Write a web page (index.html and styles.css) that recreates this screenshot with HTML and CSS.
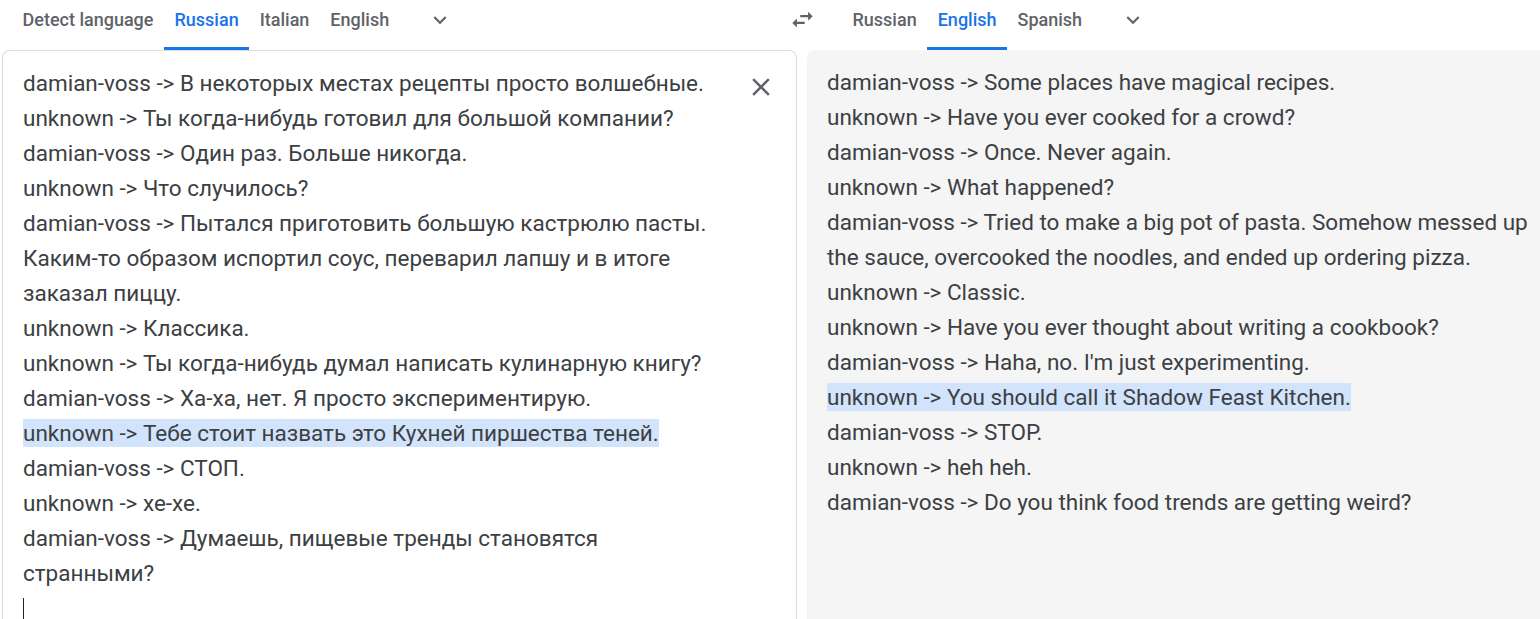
FILE: index.html
```html
<!DOCTYPE html>
<html lang="en">
<head>
<meta charset="utf-8">
<link rel="stylesheet" href="styles.css">
</head>
<body>
<div class="page">
  <div class="header">
    <div class="tabs tabs-left">
      <div class="tab">Detect language</div>
      <div class="tab active">Russian</div>
      <div class="tab">Italian</div>
      <div class="tab">English</div>
      <div class="chev"><svg width="24" height="24" viewBox="0 0 24 24"><path d="M7.41 8.59L12 13.17l4.59-4.58L18 10l-6 6-6-6 1.41-1.41z" fill="#5f6368"/></svg></div>
    </div>
    <div class="swap"><svg width="27" height="27" viewBox="0 0 24 24"><path d="M6.99 11L3 15l3.99 4v-3H14v-2H6.99v-3zM21 9l-3.99-4v3H10v2h7.01v3L21 9z" fill="#5f6368"/></svg></div>
    <div class="tabs tabs-right">
      <div class="tab">Russian</div>
      <div class="tab active">English</div>
      <div class="tab">Spanish</div>
      <div class="chev"><svg width="24" height="24" viewBox="0 0 24 24"><path d="M7.41 8.59L12 13.17l4.59-4.58L18 10l-6 6-6-6 1.41-1.41z" fill="#5f6368"/></svg></div>
    </div>
  </div>
  <div class="panels">
    <div class="panel source">
      <div class="text">
        <div>damian-voss -&gt; В некоторых местах рецепты просто волшебные.</div>
        <div>unknown -&gt; Ты когда-нибудь готовил для большой компании?</div>
        <div>damian-voss -&gt; Один раз. Больше никогда.</div>
        <div>unknown -&gt; Что случилось?</div>
        <div>damian-voss -&gt; Пытался приготовить большую кастрюлю пасты. Каким-то образом испортил соус, переварил лапшу и в итоге заказал пиццу.</div>
        <div>unknown -&gt; Классика.</div>
        <div>unknown -&gt; Ты когда-нибудь думал написать кулинарную книгу?</div>
        <div>damian-voss -&gt; Ха-ха, нет. Я просто экспериментирую.</div>
        <div><span class="hl">unknown -&gt; Тебе стоит назвать это Кухней пиршества теней.</span></div>
        <div>damian-voss -&gt; СТОП.</div>
        <div>unknown -&gt; хе-хе.</div>
        <div>damian-voss -&gt; Думаешь, пищевые тренды становятся странными?</div>
        <div><span class="caret"></span></div>
      </div>
      <div class="close"><svg width="30" height="30" viewBox="0 0 24 24"><path d="M19 6.41L17.59 5 12 10.59 6.41 5 5 6.41 10.59 12 5 17.59 6.41 19 12 13.41 17.59 19 19 17.59 13.41 12z" fill="#5f6368"/></svg></div>
    </div>
    <div class="panel target">
      <div class="text">
        <div>damian-voss -&gt; Some places have magical recipes.</div>
        <div>unknown -&gt; Have you ever cooked for a crowd?</div>
        <div>damian-voss -&gt; Once. Never again.</div>
        <div>unknown -&gt; What happened?</div>
        <div>damian-voss -&gt; Tried to make a big pot of pasta. Somehow messed up the sauce, overcooked the noodles, and ended up ordering pizza.</div>
        <div>unknown -&gt; Classic.</div>
        <div>unknown -&gt; Have you ever thought about writing a cookbook?</div>
        <div>damian-voss -&gt; Haha, no. I'm just experimenting.</div>
        <div><span class="hl">unknown -&gt; You should call it Shadow Feast Kitchen.</span></div>
        <div>damian-voss -&gt; STOP.</div>
        <div>unknown -&gt; heh heh.</div>
        <div>damian-voss -&gt; Do you think food trends are getting weird?</div>
      </div>
    </div>
  </div>
</div>
</body>
</html>
```
FILE: styles.css
```css
* { box-sizing: border-box; }
html, body { margin: 0; padding: 0; background: #fff; overflow: hidden; }
body { font-family: Roboto, "Noto Sans", Arial, sans-serif; color: #3c4043; }
.page { width: 1540px; height: 619px; padding-left: 2px; overflow: hidden; }
.header { display: grid; grid-template-columns: 770px 60px 1fr; height: 50px; }
.tabs { display: flex; align-items: stretch; padding-left: 10px; }
.tab {
  padding: 0 10.5px;
  font-size: 18px;
  font-weight: 500;
  color: #5f6368;
  display: flex;
  align-items: center;
  padding-bottom: 8px;
  border-bottom: 3px solid transparent;
}
.tab.active { color: #1a73e8; border-bottom-color: #1a73e8; }
.chev { width: 48px; margin-left: 16px; display: flex; align-items: center; justify-content: center; padding-bottom: 11px; }
.chev svg { width: 26px; height: 26px; }
.swap { display: flex; align-items: center; justify-content: center; padding-bottom: 11px; }
.panels { display: grid; grid-template-columns: 795px 1fr; column-gap: 10px; height: 569px; }
.panel { border-radius: 8px 8px 0 0; display: flex; }
.source { border: 1px solid #dadce0; border-bottom: none; padding: 15px 0 0 20px; }
.target { background: #f5f5f5; padding: 15px 0 0 20px; margin-right: -40px; }
.text { font-size: 22.5px; line-height: 35px; }
.source .text { width: 700px; }
.target .text { width: 715px; }
.close { width: 40px; margin-left: 18px; display: flex; justify-content: center; padding-top: 6px; height: 40px; }
.hl { background: #d2e3fc; padding: 1px 0; }
.caret { display: inline-block; width: 1px; height: 24px; background: #202124; vertical-align: -6px; }
```
